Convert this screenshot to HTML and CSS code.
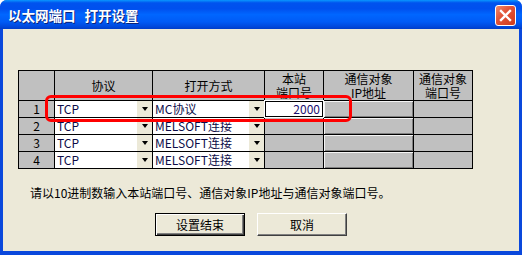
FILE: index.html
```html
<!DOCTYPE html>
<html lang="zh-CN">
<head>
    <meta charset="UTF-8">
    <title>以太网端口 打开设置</title>
    <link rel="stylesheet" href="styles.css">
</head>
<body>
    <div class="window">
        <div class="titlebar">
            <span class="title">以太网端口 打开设置</span>
            <div class="close">
                <svg width="13" height="13" viewBox="0 0 13 13">
                    <path d="M2 2 L11 11 M11 2 L2 11" stroke="#fff" stroke-width="2.4" stroke-linecap="square"/>
                </svg>
            </div>
        </div>

        <div class="client">
            <div class="table-wrap">
                <div class="grid">
                    <!-- header -->
                    <div class="hd"></div>
                    <div class="hd">协议</div>
                    <div class="hd">打开方式</div>
                    <div class="hd">本站<br>端口号</div>
                    <div class="hd">通信对象<br>IP地址</div>
                    <div class="hd">通信对象<br>端口号</div>

                    <!-- row 1 -->
                    <div class="num">1</div>
                    <div class="combo"><span class="val">TCP</span><span class="arrow"></span></div>
                    <div class="combo"><span class="val">MC协议</span><span class="arrow"></span></div>
                    <div class="input">2000</div>
                    <div class="ip"></div>
                    <div class="gray"></div>

                    <!-- row 2 -->
                    <div class="num">2</div>
                    <div class="combo"><span class="val">TCP</span><span class="arrow"></span></div>
                    <div class="combo"><span class="val">MELSOFT连接</span><span class="arrow"></span></div>
                    <div class="gray"></div>
                    <div class="ip"></div>
                    <div class="gray"></div>

                    <!-- row 3 -->
                    <div class="num">3</div>
                    <div class="combo"><span class="val">TCP</span><span class="arrow"></span></div>
                    <div class="combo"><span class="val">MELSOFT连接</span><span class="arrow"></span></div>
                    <div class="gray"></div>
                    <div class="ip"></div>
                    <div class="gray"></div>

                    <!-- row 4 -->
                    <div class="num">4</div>
                    <div class="combo"><span class="val">TCP</span><span class="arrow"></span></div>
                    <div class="combo"><span class="val">MELSOFT连接</span><span class="arrow"></span></div>
                    <div class="gray"></div>
                    <div class="ip"></div>
                    <div class="gray"></div>
                </div>
                <div class="highlight"></div>
            </div>

            <p class="note">请以10进制数输入本站端口号、通信对象IP地址与通信对象端口号。</p>

            <div class="buttons">
                <button class="btn default">设置结束</button>
                <button class="btn">取消</button>
            </div>
        </div>
    </div>
</body>
</html>
```

FILE: styles.css
```css
* {
    margin: 0;
    padding: 0;
    box-sizing: border-box;
}

body {
    background: #fff;
    font-family: "Noto Sans CJK SC", sans-serif;
    font-size: 12px;
}

.window {
    width: 522px;
    height: 255px;
    display: flex;
    flex-direction: column;
    background: #0a48dc;
    border-radius: 7px 7px 0 0;
    overflow: hidden;
}

.titlebar {
    height: 29px;
    flex: none;
    display: flex;
    align-items: center;
    justify-content: space-between;
    padding: 0 6px 0 8px;
    background: linear-gradient(to bottom, #0997ff 0%, #0053ee 10%, #0050ee 30%, #0066ff 50%, #005bf6 75%, #0048dc 92%, #003dc8 100%);
}

.title {
    color: #fff;
    font-weight: bold;
    font-size: 13.5px;
    line-height: 16px;
    word-spacing: 6px;
    text-shadow: 1px 1px 0 #0b237a;
}

.close {
    width: 21px;
    height: 21px;
    margin-top: 2px;
    border: 1px solid #fff;
    border-radius: 3px;
    background: linear-gradient(135deg, #f08b6c 0%, #e2553a 40%, #cf3a1c 100%);
    display: flex;
    align-items: center;
    justify-content: center;
}

.client {
    flex: 1;
    margin: 0 3px 4px;
    background: #ece9d8;
    padding: 41px 0 0 15px;
}

.table-wrap {
    position: relative;
    width: max-content;
}

.grid {
    display: grid;
    grid-template-columns: 35px 97px 111px 58px 89px 58px;
    grid-template-rows: 29px repeat(4, 16px);
    gap: 1px;
    padding: 1px;
    background: #000;
}

.hd {
    background: #c0c0c0;
    color: #000;
    text-align: center;
    line-height: 14px;
    display: flex;
    align-items: center;
    justify-content: center;
}

.num {
    background: #c0c0c0;
    text-align: center;
    line-height: 16px;
    color: #000;
}

.combo {
    background: #fff;
    display: flex;
    align-items: stretch;
    overflow: hidden;
}

.combo .val {
    flex: 1;
    padding-left: 2px;
    line-height: 16px;
    color: #0c0c48;
    white-space: nowrap;
}

.arrow {
    width: 15px;
    background: #ece9d8;
    display: flex;
    align-items: center;
    justify-content: center;
}

.arrow::after {
    content: "";
    border-left: 3.5px solid transparent;
    border-right: 3.5px solid transparent;
    border-top: 4px solid #000;
}

.input {
    background: #fff;
    border: 1px solid #000;
    box-shadow: 0 0 0 1px #fff;
    text-align: right;
    padding-right: 2px;
    line-height: 14px;
    color: #1a1070;
}

.ip {
    background: #c0c0c0;
    box-shadow: inset 1px 1px #f4f4f4, inset -1px -1px #808080;
}

.gray {
    background: #c0c0c0;
}

.highlight {
    position: absolute;
    left: 27px;
    top: 25px;
    width: 307px;
    height: 27px;
    border: 3px solid #f00;
    border-radius: 6px;
}

.note {
    margin: 17px 0 0 12px;
    line-height: 14px;
    color: #000;
}

.buttons {
    display: flex;
    gap: 12px;
    margin: 13px 0 0 137px;
}

.btn {
    width: 90px;
    height: 23px;
    background: #ece9d8;
    border: 1px solid;
    border-color: #fff #404040 #404040 #fff;
    box-shadow: inset -1px -1px #808080;
    font-family: "Noto Sans CJK SC", sans-serif;
    font-size: 12px;
    line-height: 14px;
    color: #000;
}

.btn.default {
    border: 1px solid #000;
    box-shadow: inset 1px 1px #fff, inset -1px -1px #404040, inset -2px -2px #808080;
}
```
